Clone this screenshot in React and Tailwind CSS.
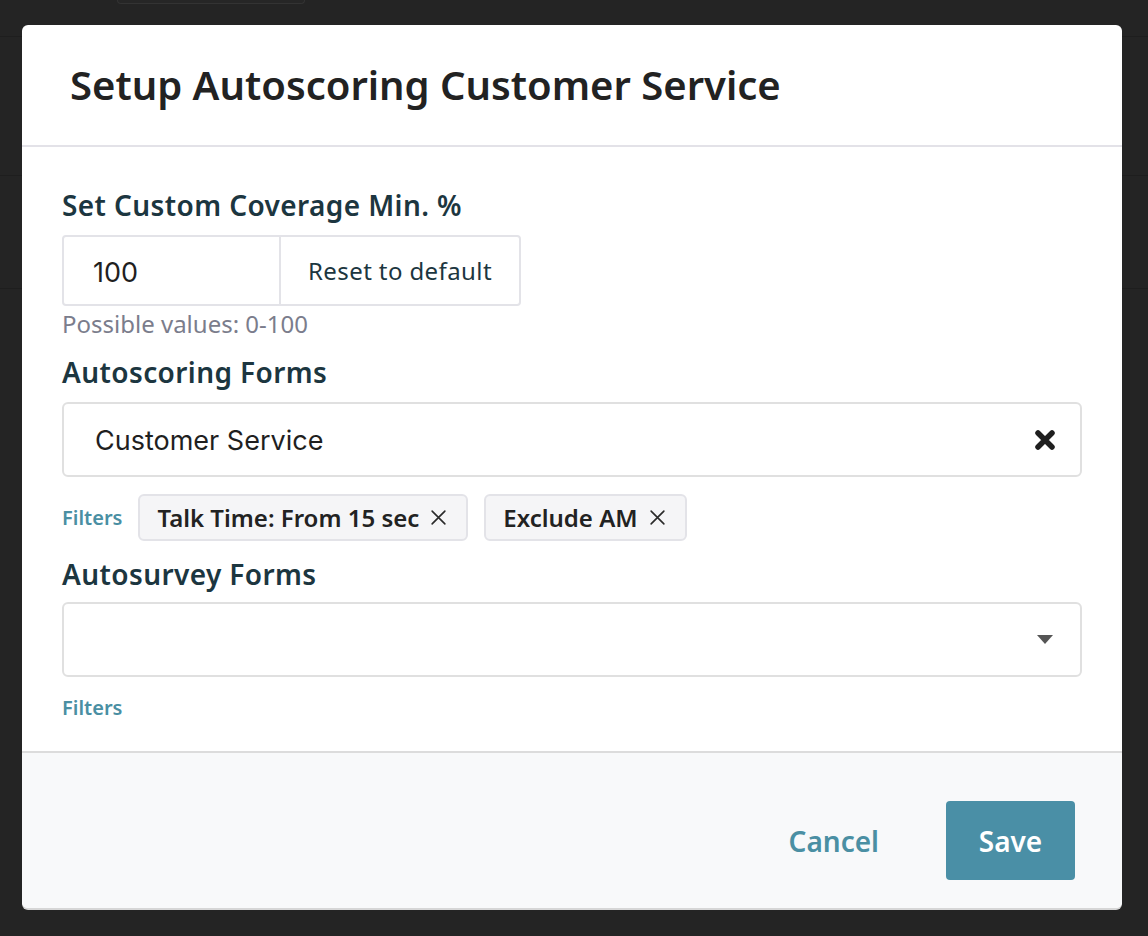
import React from "react";

const sans = "font-['Noto_Sans','Open_Sans',sans-serif]";
const inter = "font-['Inter','Liberation_Sans',sans-serif]";

const ThinX = () => (
  <svg width="17" height="17" viewBox="0 0 16 16" className="shrink-0">
    <path d="M2 2 L14 14 M14 2 L2 14" stroke="#2a2a2a" strokeWidth="1.5" strokeLinecap="round" />
  </svg>
);

const HeavyX = () => (
  <svg width="22" height="22" viewBox="0 0 22 22">
    <path d="M4 4 L18 18 M18 4 L4 18" stroke="#1f1f1f" strokeWidth="5.5" strokeLinecap="round" />
  </svg>
);

const Caret = () => (
  <svg width="16" height="9" viewBox="0 0 16 9">
    <path d="M0 0 H16 L8 9 Z" fill="#555" />
  </svg>
);

const Chip = ({ label }) => (
  <div className="flex items-center gap-[11px] h-[47px] pl-[17px] pr-[19px] bg-[#f5f5f7] border-2 border-[#e3e3e8] rounded-md">
    <span className={`${sans} text-[24px] font-semibold text-[#222]`}>{label}</span>
    <ThinX />
  </div>
);

const Label = ({ children, className = "" }) => (
  <div className={`${sans} text-[28px] leading-[36px] font-semibold tracking-[0.4px] text-[#1c3640] ${className}`}>
    {children}
  </div>
);

const Filters = () => (
  <span className={`${sans} text-[20px] font-semibold text-[#4a8fa3]`}>Filters</span>
);

export default function App() {
  return (
    <div className="relative w-[1148px] h-[936px] overflow-hidden bg-[#242424]">
      {/* page behind the backdrop */}
      <div className="flex flex-col">
        <div className="h-[37px] border-b border-[#1e1e1e] pl-[117px]">
          <div className="w-[188px] h-[4px] border border-t-0 border-[#333] rounded-b bg-[#262626]" />
        </div>
        <div className="h-[139px] border-b border-[#1e1e1e]" />
        <div className="h-[113px] border-b border-[#1e1e1e]" />
      </div>

      {/* modal */}
      <div className="absolute left-[22px] top-[25px] w-[1100px] bg-white rounded-md overflow-hidden shadow-[0_2px_0_#d6d6d6]">
        <div className="h-[122px] flex items-center pl-[48px] border-b-2 border-[#e3e2e8]">
          <h1 className={`${sans} text-[40px] font-semibold text-[#222]`}>
            Setup Autoscoring Customer Service
          </h1>
        </div>

        <div className="px-[40px] pt-[40px] pb-[30px] flex flex-col">
          <Label>Set Custom Coverage Min. %</Label>
          <div className="mt-[12px] flex w-[459px] h-[71px] border-2 border-[#e3e3e8] rounded">
            <div className={`${inter} w-[217px] flex items-center pl-[29px] pt-[5px] text-[27px] text-[#1f1f1f] border-r-2 border-[#e3e3e8]`}>
              100
            </div>
            <div className={`${sans} flex-1 flex items-center justify-center text-[24px] text-[#1c3640] tracking-[0.4px]`}>
              Reset to default
            </div>
          </div>
          <div className={`${sans} mt-[4px] text-[24px] leading-[28px] text-[#7b7d8c]`}>Possible values: 0-100</div>

          <Label className="mt-[16px]">Autoscoring Forms</Label>
          <div className="mt-[12px] h-[75px] flex items-center justify-between pl-[31px] pr-[24px] border-2 border-[#e0e0e0] rounded-md">
            <span className={`${inter} pt-[4px] text-[27px] text-[#1f1f1f]`}>Customer Service</span>
            <HeavyX />
          </div>
          <div className="mt-[17px] flex items-center gap-[16px]">
            <Filters />
            <div className="flex gap-[16px]">
              <Chip label="Talk Time: From 15 sec" />
              <Chip label="Exclude AM" />
            </div>
          </div>

          <Label className="mt-[15px]">Autosurvey Forms</Label>
          <div className="mt-[10px] h-[75px] flex items-center justify-end pr-[27px] border-2 border-[#e0e0e0] rounded-md">
            <Caret />
          </div>
          <div className="mt-[19px] leading-[24px]">
            <Filters />
          </div>
        </div>

        <div className="h-[157px] bg-[#f8f9fa] border-t-2 border-[#dcdcdc] flex justify-end items-start pt-[48px] pr-[47px] gap-[67px]">
          <button className={`${sans} h-[79px] text-[28px] font-semibold text-[#4a8fa3]`}>Cancel</button>
          <button className={`${sans} h-[79px] w-[129px] rounded bg-[#4a8fa6] text-[28px] font-semibold text-white`}>
            Save
          </button>
        </div>
      </div>
    </div>
  );
}
